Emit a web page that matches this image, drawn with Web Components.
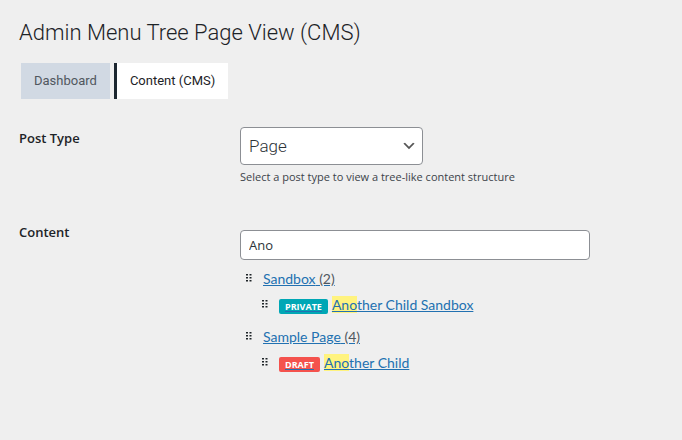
<!DOCTYPE html>
<html lang="en">
<head>
<meta charset="utf-8">
<title>Admin Menu Tree Page View (CMS)</title>
<style>
body{margin:0;background:#efefef;color:#1d2327;font:14px/20px "Open Sans","Noto Sans",sans-serif}
</style>
</head>
<body>
<settings-page>
  <span slot="title">Admin Menu Tree Page View (CMS)</span>
  <nav-tab slot="tabs">Dashboard</nav-tab>
  <nav-tab slot="tabs" active>Content (CMS)</nav-tab>
  <post-type-field></post-type-field>
  <content-field>
    <tree-item label="Sandbox" count="2">
      <tree-item status="private" match="Ano" label="ther Child Sandbox"></tree-item>
    </tree-item>
    <tree-item label="Sample Page" count="4">
      <tree-item status="draft" match="Ano" label="ther Child"></tree-item>
    </tree-item>
  </content-field>
</settings-page>
<script>
const define = (name, html, setup) => customElements.define(name, class extends HTMLElement {
  constructor() {
    super();
    const t = document.createElement('template');
    t.innerHTML = html;
    this.attachShadow({mode: 'open'}).append(t.content.cloneNode(true));
  }
  connectedCallback() { if (setup) setup(this, this.shadowRoot); }
});

define('settings-page', `
<style>
:host{display:block;padding:20px 19px}
h1{margin:0;font:300 22px/26px Roboto,sans-serif}
nav{display:flex;gap:4px;padding:17px 2px 28px}
main{display:flex;flex-direction:column;gap:36px}
</style>
<h1><slot name="title"></slot></h1>
<nav><slot name="tabs"></slot></nav>
<main><slot></slot></main>`);

define('nav-tab', `
<style>
:host{display:block}
a{display:block;padding:8px 13px;background:#d1d9e3;color:#50575e;font:13px/20px Roboto,sans-serif;text-decoration:none}
:host([active]) a{border-left:3px solid #1d2730;background:#fff;color:#1d2327}
</style>
<a href="#"><slot></slot></a>`);

const row = `
:host{display:grid;grid-template-columns:221px minmax(0,1fr)}
label{padding-top:1px;font-weight:600;font-size:13px}`;

define('post-type-field', `
<style>${row}
.pick{display:grid;width:183px}
select,svg{grid-area:1/1}
select{appearance:none;height:38px;margin:0;padding:0 8px;border:1px solid #8c8f94;border-radius:4px;background:#fff;color:#2c3338;font:300 17px/24px Roboto,sans-serif}
svg{justify-self:end;align-self:center;margin-right:6px;pointer-events:none}
p{margin:4px 0 0;font-size:11px;line-height:16px;color:#3c434a}
</style>
<label for="type">Post Type</label>
<div>
  <div class="pick">
    <select id="type"><option>Page</option></select>
    <svg width="16" height="16" viewBox="0 0 20 20"><path d="M5 6l5 5 5-5 2 1-7 7-7-7 2-1z" fill="#555"/></svg>
  </div>
  <p>Select a post type to view a tree-like content structure</p>
</div>`);

define('content-field', `
<style>${row}
input{display:block;box-sizing:border-box;width:100%;max-width:350px;height:30px;margin:9px 0 0;padding:0 8px;border:1px solid #8c8f94;border-radius:4px;background:#fff;color:#2c3338;font:inherit;font-size:13px}
.tree{display:flex;flex-direction:column;gap:6px;padding:6px 6px 0}
</style>
<label for="search">Content</label>
<div>
  <input id="search" type="text" value="Ano">
  <div class="tree"><slot></slot></div>
</div>`);

define('tree-item', `
<style>
:host{display:block}
.line{display:flex;align-items:center;gap:11px;height:26px}
a{color:#2271b1;font-size:14px;font-family:Lato,sans-serif}
.count{color:#50575e}
mark{background:#fff37f;color:inherit}
.badge{display:inline-block;margin-right:4px;padding:0 6px;border-radius:2px;color:#fff;font:700 9px/15px "Open Sans",sans-serif;text-transform:uppercase;text-decoration:underline;text-decoration-color:#2271b1}
.private{background:#00a7b5}
.draft{background:#f4524d}
.children{padding-left:16px}
[hidden]{display:none}
</style>
<div class="line">
  <svg width="6" height="10" viewBox="0 0 6 10" fill="#1d2327"><path d="M0 0h2v1.5H0zM3.5 0h2v1.5h-2zM0 3h2v1.5H0zM3.5 3h2v1.5h-2zM0 6h2v1.5H0zM3.5 6h2v1.5h-2z"/></svg>
  <a href="#"><span class="badge"></span><mark></mark><span class="label"></span><span class="count"></span></a>
</div>
<div class="children"><slot></slot></div>`, (el, root) => {
  const q = s => root.querySelector(s), a = n => el.getAttribute(n);
  q('.label').textContent = a('label');
  if (a('match')) q('mark').textContent = a('match'); else q('mark').hidden = true;
  if (a('count')) q('.count').textContent = ' (' + a('count') + ')'; else q('.count').hidden = true;
  if (a('status')) { q('.badge').textContent = a('status'); q('.badge').classList.add(a('status')); }
  else q('.badge').hidden = true;
});
</script>
</body>
</html>
